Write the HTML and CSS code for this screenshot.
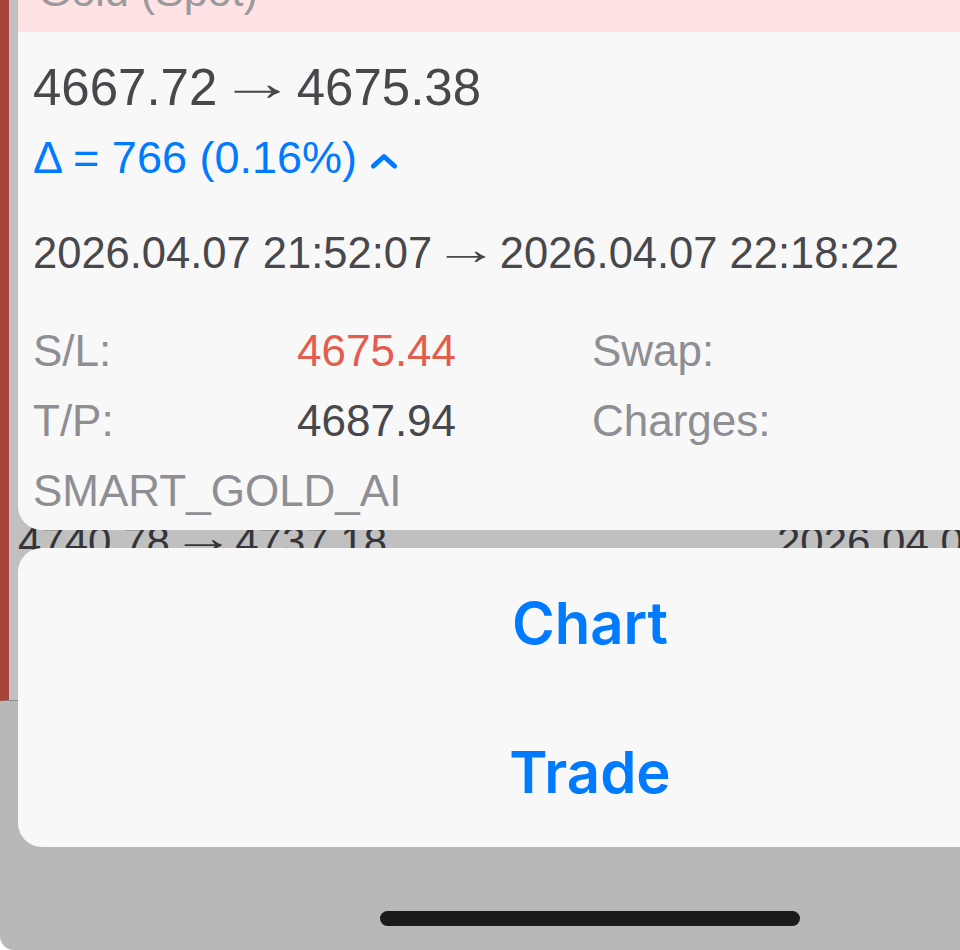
FILE: index.html
```html
<!DOCTYPE html>
<html lang="en">
<head>
  <meta charset="UTF-8" />
  <meta name="viewport" content="width=device-width, initial-scale=1" />
  <title>Position - Gold (Spot)</title>
  <link rel="stylesheet" href="styles.css">
</head>
<body>
  <div class="screen">
    <div class="positions">
      <div class="position-row">
        <span class="pr-price">4740.78<span class="arr">→</span>4737.18</span>
        <span class="pr-time">2026.04.07 21:20:41</span>
      </div>
    </div>
    <div class="home-bar"></div>

    <div class="sheet">
      <div class="deal-card">
        <div class="deal-head">Gold (Spot)</div>
        <div class="deal-body">
          <div class="deal-prices">4667.72<span class="arr">→</span>4675.38</div>
          <div class="deal-delta">Δ = 766 (0.16%)<svg class="chev" width="28" height="16" viewBox="0 0 28 16"><polyline points="3.5,13 14,3.5 24.5,13" /></svg></div>
          <div class="deal-time">2026.04.07 21:52:07<span class="arr">→</span>2026.04.07 22:18:22</div>
          <div class="deal-grid">
            <span class="lbl">S/L:</span>
            <span class="val sl">4675.44</span>
            <span class="lbl">Swap:</span>
            <span class="lbl">T/P:</span>
            <span class="val">4687.94</span>
            <span class="lbl">Charges:</span>
            <span class="lbl">SMART_GOLD_AI</span>
          </div>
        </div>
      </div>

      <div class="actions">
        <button class="action-btn">Chart</button>
        <button class="action-btn">Trade</button>
      </div>
    </div>
  </div>
</body>
</html>
```

FILE: styles.css
```css
:root {
  --backdrop: #b8b8b8;
  --list-dim: #c0c0c0;
  --row-mark: #a8443c;
  --card-bg: #f8f8f8;
  --head-bg: #ffe3e4;
  --text-main: #47474c;
  --text-grey: #8e8e93;
  --text-red: #e35d4f;
  --ios-blue: #007aff;
}
* {
  box-sizing: border-box;
}
html {
  background: #fff;
}
body {
  margin: 0;
  overflow: hidden;
  font-family: 'Liberation Sans', Arial, sans-serif;
}
.screen {
  position: relative;
  width: 960px;
  height: 950px;
  overflow: hidden;
  background: var(--backdrop);
  border-bottom-left-radius: 14px;
}
/* the font's arrow is short, stretch it to the long iOS one */
.arr {
  display: inline-block;
  margin: 0 0.278em;
  transform: translateY(-0.09em) scaleX(1.5);
}

/* dimmed list behind the sheet */
.positions {
  height: 701px;
  background: var(--list-dim);
  border-left: 9px solid var(--row-mark);
  border-bottom: 1px solid #8c8c8c;
  padding: 517px 0 0 9px;
}
.position-row {
  display: grid;
  grid-template-columns: 759px auto;
  font-size: 42px;
  line-height: 50px;
  color: #34343a;
  white-space: nowrap;
}
.home-bar {
  width: 420px;
  height: 15px;
  margin: 210px 0 0 380px;
  border-radius: 8px;
  background: #1a1a1a;
}

/* popover sheet */
.sheet {
  position: absolute;
  top: -60px;
  left: 18px;
  width: 1144px;
}
.deal-card {
  background: var(--card-bg);
  border-radius: 0 0 24px 24px;
  overflow: hidden;
}
.deal-head {
  height: 92px;
  padding: 26px 0 0 20px;
  background: var(--head-bg);
  color: #9a9a9e;
  font-size: 43px;
  line-height: 50px;
}
.deal-body {
  padding: 26px 0 4px 15px;
  color: var(--text-main);
}
.deal-prices {
  font-size: 51px;
  line-height: 60px;
}
.deal-delta {
  margin-top: 14px;
  font-size: 45px;
  line-height: 52px;
  color: var(--ios-blue);
}
.chev {
  margin-left: 13px;
  vertical-align: middle;
}
.chev polyline {
  fill: none;
  stroke: var(--ios-blue);
  stroke-width: 5;
  stroke-linecap: round;
  stroke-linejoin: round;
}
.deal-time {
  margin-top: 43px;
  font-size: 43.5px;
  line-height: 52px;
  white-space: nowrap;
}
.deal-grid {
  margin-top: 37px;
  display: grid;
  grid-template-columns: 264px 295px 1fr;
  font-size: 44px;
  line-height: 70px;
}
.lbl {
  color: var(--text-grey);
}
.val {
  color: var(--text-main);
}
.val.sl {
  color: var(--text-red);
}

.actions {
  margin-top: 18px;
  height: 299px;
  display: flex;
  flex-direction: column;
  background: var(--card-bg);
  border-radius: 24px;
}
.action-btn {
  flex: 1;
  border: none;
  background: none;
  padding: 0;
  font-family: Inter, 'Liberation Sans', sans-serif;
  font-weight: 600;
  font-size: 58px;
  color: var(--ios-blue);
  cursor: pointer;
}
```
